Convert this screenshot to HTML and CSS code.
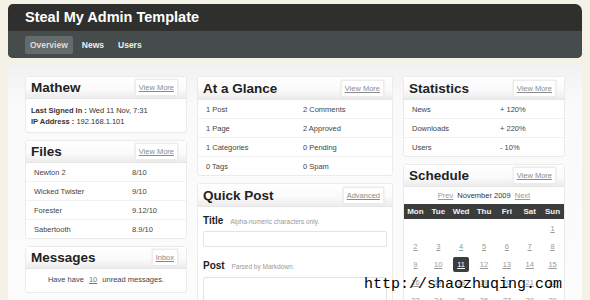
FILE: index.html
```html
<!DOCTYPE html>
<html lang="en">
<head>
    <meta charset="UTF-8">
    <title>Steal My Admin Template</title>
    <link rel="stylesheet" href="styles.css">
</head>
<body>
    <div class="page">
        <header class="top">
            <h1>Steal My Admin Template</h1>
            <nav class="nav">
                <a href="#" class="active">Overview</a>
                <a href="#">News</a>
                <a href="#">Users</a>
            </nav>
        </header>

        <div class="content">
            <div class="column side">
                <div class="box">
                    <div class="box-head"><h2>Mathew</h2><a href="#" class="btn">View More</a></div>
                    <div class="box-body info">
                        <p><b>Last Signed In :</b> Wed 11 Nov, 7:31</p>
                        <p><b>IP Address :</b> 192.168.1.101</p>
                    </div>
                </div>

                <div class="box">
                    <div class="box-head"><h2>Files</h2><a href="#" class="btn">View More</a></div>
                    <table class="list">
                        <tr><td>Newton 2</td><td>8/10</td></tr>
                        <tr><td>Wicked Twister</td><td>9/10</td></tr>
                        <tr><td>Forester</td><td>9.12/10</td></tr>
                        <tr><td>Sabertooth</td><td>8.9/10</td></tr>
                    </table>
                </div>

                <div class="box">
                    <div class="box-head"><h2>Messages</h2><a href="#" class="btn">Inbox</a></div>
                    <div class="box-body msg">Have have <a href="#">10</a> unread messages.</div>
                </div>
            </div>

            <div class="column main">
                <div class="box">
                    <div class="box-head tall"><h2>At a Glance</h2><a href="#" class="btn">View More</a></div>
                    <table class="list glance">
                        <tr><td>1 Post</td><td>2 Comments</td></tr>
                        <tr><td>1 Page</td><td>2 Approved</td></tr>
                        <tr><td>1 Categories</td><td>0 Pending</td></tr>
                        <tr><td>0 Tags</td><td>0 Spam</td></tr>
                    </table>
                </div>

                <div class="box">
                    <div class="box-head tall"><h2>Quick Post</h2><a href="#" class="btn">Advanced</a></div>
                    <form class="box-body post-form">
                        <label>Title <span>Alpha-numeric characters only.</span></label>
                        <input type="text">
                        <label>Post <span>Parsed by Markdown.</span></label>
                        <textarea></textarea>
                    </form>
                </div>
            </div>

            <div class="column side">
                <div class="box">
                    <div class="box-head tall"><h2>Statistics</h2><a href="#" class="btn">View More</a></div>
                    <table class="list stats">
                        <tr><td>News</td><td>+ 120%</td></tr>
                        <tr><td>Downloads</td><td>+ 220%</td></tr>
                        <tr><td>Users</td><td>- 10%</td></tr>
                    </table>
                </div>

                <div class="box">
                    <div class="box-head"><h2>Schedule</h2><a href="#" class="btn">View More</a></div>
                    <div class="month"><a href="#">Prev</a> November 2009 <a href="#">Next</a></div>
                    <table class="calendar">
                        <tr><th>Mon</th><th>Tue</th><th>Wed</th><th>Thu</th><th>Fri</th><th>Sat</th><th>Sun</th></tr>
                        <tr><td></td><td></td><td></td><td></td><td></td><td></td><td><a href="#">1</a></td></tr>
                        <tr><td><a href="#">2</a></td><td><a href="#">3</a></td><td><a href="#">4</a></td><td><a href="#">5</a></td><td><a href="#">6</a></td><td><a href="#">7</a></td><td><a href="#">8</a></td></tr>
                        <tr><td><a href="#">9</a></td><td><a href="#">10</a></td><td><a href="#" class="today">11</a></td><td><a href="#">12</a></td><td><a href="#">13</a></td><td><a href="#">14</a></td><td><a href="#">15</a></td></tr>
                        <tr><td><a href="#">16</a></td><td><a href="#">17</a></td><td><a href="#">18</a></td><td><a href="#">19</a></td><td><a href="#">20</a></td><td><a href="#">21</a></td><td><a href="#">22</a></td></tr>
                        <tr><td><a href="#">23</a></td><td><a href="#">24</a></td><td><a href="#">25</a></td><td><a href="#">26</a></td><td><a href="#">27</a></td><td><a href="#">28</a></td><td><a href="#">29</a></td></tr>
                    </table>
                </div>
            </div>
        </div>
    </div>

    <div class="watermark">http://shaozhuqing.com</div>
</body>
</html>
```

FILE: styles.css
```css
body {
    margin: 0;
    font-family: "Liberation Sans", Arial, sans-serif;
    background-color: #f4f1e7;
    color: #333;
    overflow: hidden;
}

.page {
    width: 574px;
    margin-left: 8px;
    padding-top: 4px;
}

.top {
    background: #2f302e;
    border-radius: 5px 7px 5px 5px;
    overflow: hidden;
}

.top h1 {
    margin: 0;
    height: 27px;
    line-height: 27px;
    padding-left: 17px;
    font-size: 14.5px;
    font-weight: bold;
    color: #fff;
}

.nav {
    height: 27px;
    background: #464c4b;
    display: flex;
    align-items: center;
    gap: 4px;
    padding-left: 17px;
}

.nav a {
    font-size: 8.5px;
    font-weight: bold;
    color: #f0f0f0;
    text-decoration: none;
    padding: 4px 5px;
    border-radius: 2px;
}

.nav a.active {
    background: #656b6a;
    color: #dcdcdc;
}

.content {
    margin-top: 6px;
    padding: 12px 17px 0;
    background: linear-gradient(#f1f1f1, #fafafa 40px, #fcfcfc);
    display: flex;
    gap: 10px;
    align-items: flex-start;
    min-height: 260px;
}

.column {
    display: flex;
    flex-direction: column;
    gap: 7px;
}

.column.side {
    width: 162px;
}

.column.main {
    width: 196px;
}

.box {
    background: #fff;
    border: 1px solid #ebebeb;
    border-radius: 3px;
}

.box-head {
    height: 21px;
    display: flex;
    align-items: center;
    justify-content: space-between;
    padding: 0 8px 0 5px;
    background: linear-gradient(#fff, #fafafa 60%, #ececec);
    border-bottom: 1px solid #e6e6e6;
}

.box-head.tall {
    height: 22px;
}

.box-head h2 {
    margin: 0;
    font-size: 13.5px;
    font-weight: bold;
    color: #222;
}

.btn {
    font-size: 7.5px;
    color: #8a8a8a;
    background: #fff;
    border: 1px solid #ececec;
    box-shadow: 0 0 2px #e4e4e4;
    padding: 4px 3px;
    line-height: 7px;
}

.box-body {
    padding: 5px;
    font-size: 7.5px;
}

.info {
    padding: 6px 5px 5px;
}

.info p {
    margin: 0;
    line-height: 11px;
    color: #333;
}

.list {
    width: 100%;
    border-collapse: collapse;
    font-size: 7.5px;
    color: #444;
}

.list td {
    height: 18px;
    padding: 0 0 0 8px;
    border-top: 1px solid #f2f2f2;
}

.list tr:first-child td {
    border-top: none;
}

.list td:first-child {
    width: 90px;
}

.glance td:first-child {
    width: 89px;
}

.stats td:first-child {
    width: 80px;
}

.msg {
    text-align: center;
    padding: 6px 5px 8px;
    color: #444;
}

.msg a {
    color: #777;
    margin: 0 3px;
}

.post-form {
    display: flex;
    flex-direction: column;
    padding: 6px 5px 0;
}

.post-form label {
    font-size: 10px;
    font-weight: bold;
    color: #222;
    margin-top: 2px;
}

.post-form label span {
    font-size: 6.5px;
    font-weight: normal;
    color: #999;
    margin-left: 4px;
}

.post-form input {
    margin: 5px 0 11px;
    height: 16px;
    border: 1px solid #e3e3e3;
    border-radius: 2px;
    box-sizing: border-box;
}

.post-form textarea {
    margin-top: 6px;
    height: 40px;
    border: 1px solid #e3e3e3;
    border-radius: 2px;
    resize: none;
}

.month {
    text-align: center;
    font-size: 7.5px;
    color: #333;
    padding: 4px 0 4px;
}

.month a {
    color: #999;
    margin: 0 2px;
}

.calendar {
    width: 100%;
    border-collapse: collapse;
    font-size: 7.5px;
    text-align: center;
}

.calendar th {
    background: #3b3d3c;
    color: #f2f2f2;
    font-weight: bold;
    font-size: 8px;
    height: 15px;
    width: 23px;
    padding: 0;
}

.calendar td {
    height: 18px;
    padding: 0;
}

.calendar td a {
    color: #999;
    display: inline-block;
    width: 16px;
    line-height: 15px;
    vertical-align: middle;
}

.calendar td a.today {
    background: #3b3d3c;
    color: #fff;
    border-radius: 2px;
}

.watermark {
    position: absolute;
    left: 364px;
    top: 276px;
    font-family: "Liberation Mono", "Courier New", monospace;
    font-size: 15px;
    color: #000;
}
```
